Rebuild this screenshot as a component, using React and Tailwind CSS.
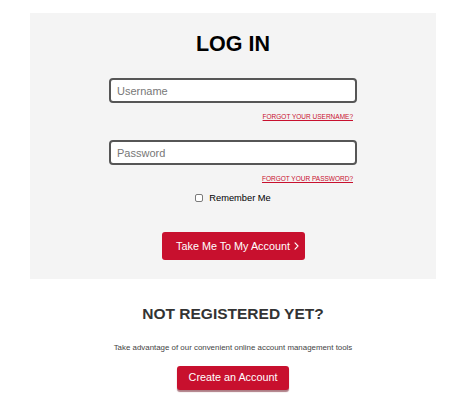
const FONT = "font-['Liberation_Sans',Arial,Helvetica,sans-serif]";

const Chevron = () => (
    <svg width="5" height="8" viewBox="0 0 5 8" fill="none" className="absolute right-[6px] top-[10px]">
        <polyline points="1,0.8 4,4 1,7.2" stroke="white" strokeWidth="1.1" strokeLinecap="round" strokeLinejoin="round" />
    </svg>
);

const Field = ({ placeholder, type = "text" }) => (
    <input
        type={type}
        placeholder={placeholder}
        className="h-[25px] w-full rounded-[4px] border-2 border-[#565656] bg-white px-[6px] text-[11px] text-[#222] outline-none placeholder:text-[#777]"
    />
);

const ForgotLink = ({ children }) => (
    <div className="flex justify-end pr-[4px]">
        <a href="#" className="text-[6.5px] leading-none text-[#c8102e] underline">
            {children}
        </a>
    </div>
);

const App = () => {
    return (
        <div className={`min-h-[393px] w-[474px] overflow-hidden bg-white ${FONT}`}>
            <div className="ml-[30px] mt-[13px] flex w-[406px] flex-col items-center bg-[#f4f4f4] pb-[19px] pt-[21px]">
                <h1 className="text-[21.5px] font-bold leading-none text-black">LOG IN</h1>

                <div className="mt-[22px] w-[248px]">
                    <Field placeholder="Username" />
                    <div className="mt-[10.5px]">
                        <ForgotLink>FORGOT YOUR USERNAME?</ForgotLink>
                    </div>
                    <div className="mt-[19.5px]">
                        <Field placeholder="Password" type="password" />
                    </div>
                    <div className="mt-[11px]">
                        <ForgotLink>FORGOT YOUR PASSWORD?</ForgotLink>
                    </div>
                </div>

                <label className="mt-[11px] flex items-center gap-[6px]">
                    <span className="h-[8px] w-[8px] rounded-[2px] border border-[#7a7a7a] bg-white" />
                    <span className="text-[9.3px] leading-none text-black">Remember Me</span>
                </label>

                <button className="relative mt-[29.5px] h-[28px] w-[143px] rounded-[3px] bg-[#c8102e] text-[10.8px] leading-none text-white">
                    Take Me To My Account
                    <Chevron />
                </button>
            </div>

            <div className="ml-[30px] flex w-[406px] flex-col items-center">
                <h2 className="mt-[27px] text-[15.5px] font-bold leading-none text-[#333]">NOT REGISTERED YET?</h2>
                <p className="mt-[22.5px] text-[7.9px] leading-none text-[#444]">
                    Take advantage of our convenient online account management tools
                </p>
                <button className="mt-[13.5px] h-[24px] w-[112px] rounded-[3px] bg-[#c8102e] text-[10.8px] leading-none text-white shadow-[0_2px_1px_rgba(110,20,35,0.55)]">
                    Create an Account
                </button>
            </div>
        </div>
    );
};

export default App;
